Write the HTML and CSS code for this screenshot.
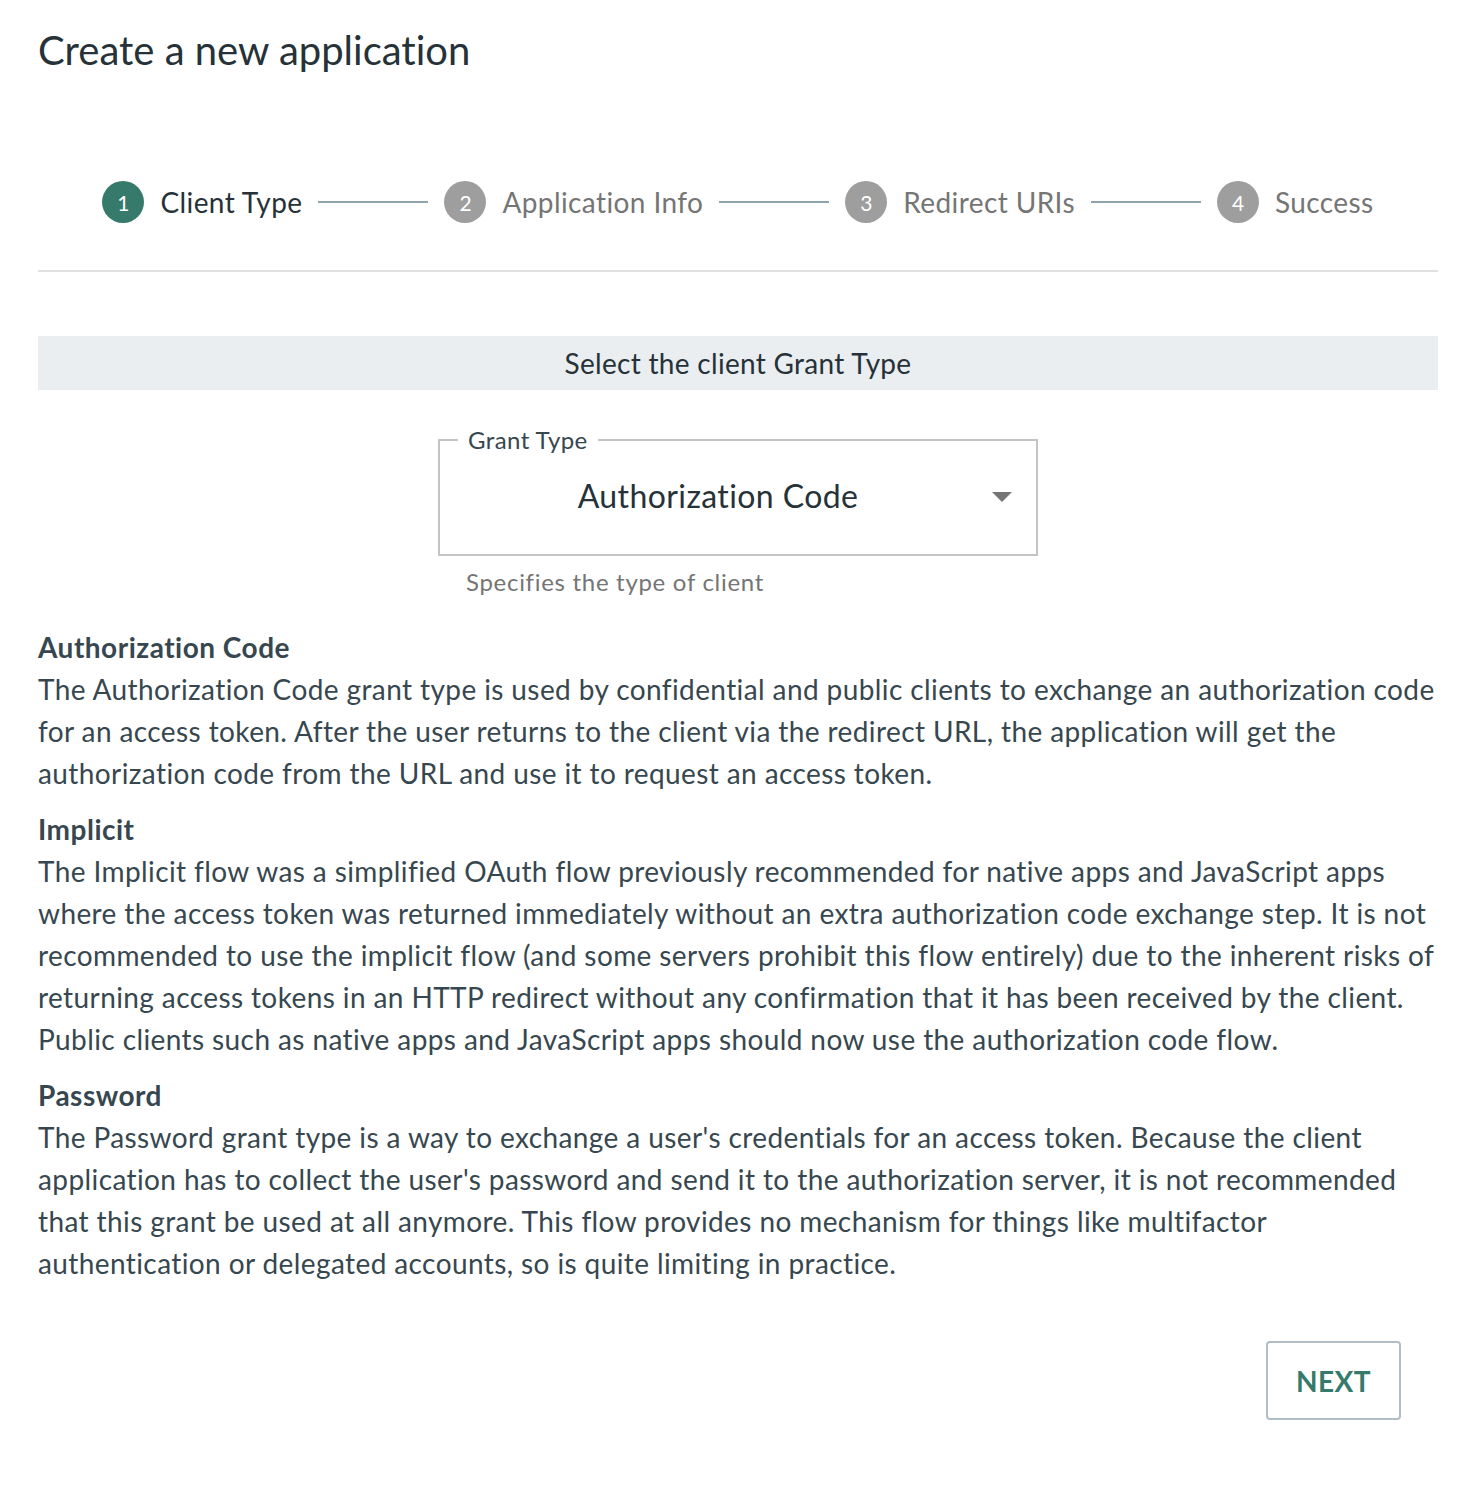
FILE: index.html
```html
<!DOCTYPE html>
<html>
<head>
<meta charset="utf-8">
<link rel="stylesheet" href="styles.css">
</head>
<body>
<main class="page">
  <h1 class="title">Create a new application</h1>

  <ol class="stepper">
    <li class="step step-active"><span class="step-num">1</span><span class="step-label">Client Type</span></li>
    <li class="connector"></li>
    <li class="step"><span class="step-num">2</span><span class="step-label">Application Info</span></li>
    <li class="connector"></li>
    <li class="step"><span class="step-num">3</span><span class="step-label">Redirect URIs</span></li>
    <li class="connector"></li>
    <li class="step"><span class="step-num">4</span><span class="step-label">Success</span></li>
  </ol>

  <div class="divider"></div>

  <div class="banner">Select the client Grant Type</div>

  <div class="field-wrap">
    <fieldset class="select-box">
      <legend class="select-legend">Grant Type</legend>
      <div class="select-value">Authorization Code</div>
      <svg class="select-arrow" width="20" height="10" viewBox="0 0 20 10"><path d="M0 0 L20 0 L10 10 Z" fill="#757575"/></svg>
    </fieldset>
    <div class="helper">Specifies the type of client</div>
  </div>

  <section class="grant">
    <h2 class="grant-title">Authorization Code</h2>
    <p class="grant-text">The Authorization Code grant type is used by confidential and public clients to exchange an authorization code for an access token. After the user returns to the client via the redirect URL, the application will get the authorization code from the URL and use it to request an access token.</p>
  </section>
  <section class="grant">
    <h2 class="grant-title">Implicit</h2>
    <p class="grant-text">The Implicit flow was a simplified OAuth flow previously recommended for native apps and JavaScript apps where the access token was returned immediately without an extra authorization code exchange step. It is not recommended to use the implicit flow (and some servers prohibit this flow entirely) due to the inherent risks of returning access tokens in an HTTP redirect without any confirmation that it has been received by the client. Public clients such as native apps and JavaScript apps should now use the authorization code flow.</p>
  </section>
  <section class="grant">
    <h2 class="grant-title">Password</h2>
    <p class="grant-text">The Password grant type is a way to exchange a user's credentials for an access token. Because the client application has to collect the user's password and send it to the authorization server, it is not recommended that this grant be used at all anymore. This flow provides no mechanism for things like multifactor authentication or delegated accounts, so is quite limiting in practice.</p>
  </section>

  <div class="actions">
    <button class="btn-next">NEXT</button>
  </div>
</main>
</body>
</html>
```

FILE: styles.css
```css
* { box-sizing: border-box; }
html, body { margin: 0; padding: 0; background: #fff; }
body {
  font-family: Lato, "Open Sans", sans-serif;
  color: #37474f;
  font-variant-ligatures: none;
}
.page {
  width: 1400px;
  margin-left: 38px;
  padding-top: 24px;
}
.title {
  margin: 0;
  font-size: 40px;
  font-weight: 400;
  line-height: 52px;
  color: #263238;
}
.stepper {
  list-style: none;
  margin: 102px 0 0;
  padding: 0;
  display: flex;
  justify-content: center;
  align-items: center;
  height: 48px;
}
.step {
  display: flex;
  align-items: center;
  gap: 16px;
}
.step-num {
  width: 42px;
  height: 42px;
  border-radius: 50%;
  background: #9e9e9e;
  color: #fff;
  font-size: 21px;
  display: flex;
  align-items: center;
  justify-content: center;
}
.step-active .step-num { background: #357a6b; }
.step-label {
  font-size: 28px;
  letter-spacing: 0.4px;
  color: #757575;
}
.step-active .step-label { color: #263238; }
.connector {
  width: 110px;
  height: 2px;
  background: #90a4ae;
  margin: 0 16px;
}
.divider {
  height: 2px;
  background: #e0e0e0;
  margin-top: 44px;
}
.banner {
  margin-top: 64px;
  height: 54px;
  background: #eaeef1;
  font-size: 28px;
  letter-spacing: 0.3px;
  line-height: 54px;
  text-align: center;
  color: #263238;
}
.field-wrap {
  width: 600px;
  margin: 38px auto 0;
}
.select-box {
  position: relative;
  margin: 0;
  height: 128px;
  border: 2px solid #c4c4c4;
  border-radius: 0;
  padding: 0 20px 0 16px;
}
.select-legend {
  font-size: 24px;
  line-height: 24px;
  letter-spacing: 0.4px;
  padding: 0 10px;
  margin-left: 2px;
  color: #37474f;
}
.select-value {
  font-size: 32px;
  letter-spacing: 0.4px;
  text-align: center;
  padding-right: 36px;
  margin-top: 24px;
  color: #263238;
}
.select-arrow {
  position: absolute;
  right: 24px;
  top: 40px;
}
.helper {
  margin-top: 11px;
  padding-left: 28px;
  font-size: 24px;
  letter-spacing: 0.7px;
  color: #757575;
}
.grant { margin-top: 14px; }
.grant:first-of-type { margin-top: 30px; }
.grant-title {
  margin: 0;
  font-size: 28px;
  line-height: 42px;
  letter-spacing: 0.5px;
  font-weight: 700;
  color: #37474f;
}
.grant-text {
  margin: 0;
  font-size: 28px;
  line-height: 42px;
  letter-spacing: 0.4px;
}
.actions {
  display: flex;
  justify-content: flex-end;
  padding-right: 37px;
  margin-top: 57px;
}
.btn-next {
  width: 135px;
  height: 79px;
  background: #fff;
  border: 2px solid #b0bec5;
  border-radius: 4px;
  font-family: inherit;
  font-size: 28px;
  font-weight: 700;
  letter-spacing: 0.5px;
  color: #357a6b;
}
```
